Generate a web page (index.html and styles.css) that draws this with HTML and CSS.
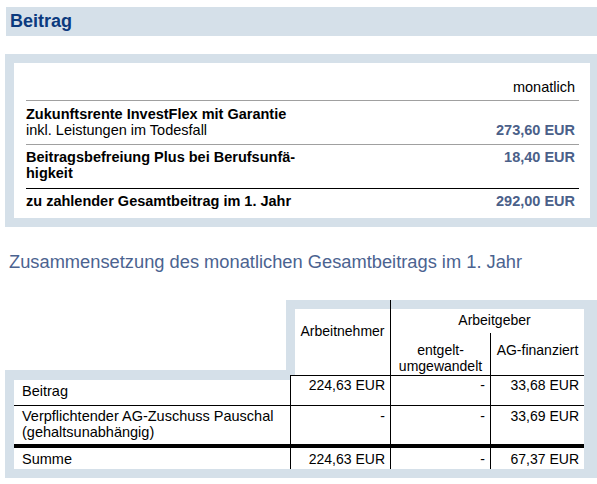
FILE: index.html
```html
<!DOCTYPE html>
<html lang="de">
<head>
<meta charset="utf-8">
<title>Beitrag</title>
<link rel="stylesheet" href="styles.css">
</head>
<body>
<div class="page">
  <h1 class="titlebar">Beitrag</h1>

  <section class="box1">
    <div class="t1-head">monatlich</div>
    <div class="t1-row r1">
      <div class="t1-label"><strong>Zukunftsrente InvestFlex mit Garantie</strong><br>inkl. Leistungen im Todesfall</div>
      <div class="t1-amount">273,60 EUR</div>
    </div>
    <div class="t1-row r2">
      <div class="t1-label"><strong>Beitragsbefreiung Plus bei Berufsunfä-<br>higkeit</strong></div>
      <div class="t1-amount">18,40 EUR</div>
    </div>
    <div class="t1-row r3">
      <div class="t1-label"><strong>zu zahlender Gesamtbeitrag im 1. Jahr</strong></div>
      <div class="t1-amount">292,00 EUR</div>
    </div>
  </section>

  <h2 class="subhead">Zusammensetzung des monatlichen Gesamtbeitrags im 1. Jahr</h2>

  <section class="comp">
    <div class="comp-head">
      <div class="head-spacer"></div>
      <div class="head-main">
        <div class="h-an">Arbeitnehmer</div>
        <div class="h-ag">
          <div class="h-ag-inner">
            <div class="h-ag-title">Arbeitgeber</div>
            <div class="h-ag-sub">
              <div class="h-eu">entgelt-<br>umgewandelt</div>
              <div class="h-fin">AG-finanziert</div>
            </div>
          </div>
        </div>
      </div>
    </div>
    <div class="comp-body">
      <div class="c lab row1">Beitrag</div>
      <div class="c val row1">224,63 EUR</div>
      <div class="c val row1">-</div>
      <div class="c val row1">33,68 EUR</div>

      <div class="c lab row2">Verpflichtender AG-Zuschuss Pauschal<br>(gehaltsunabhängig)</div>
      <div class="c val row2">-</div>
      <div class="c val row2">-</div>
      <div class="c val row2">33,69 EUR</div>

      <div class="c lab row3">Summe</div>
      <div class="c val row3">224,63 EUR</div>
      <div class="c val row3">-</div>
      <div class="c val row3">67,37 EUR</div>
    </div>
  </section>
</div>
</body>
</html>
```

FILE: styles.css
```css
* {
  box-sizing: border-box;
}

body {
  margin: 0;
  background: #ffffff;
  font-family: "Liberation Sans", Arial, sans-serif;
  color: #000000;
}

.page {
  padding-top: 7px;
}

.titlebar {
  margin: 0 0 18px 6px;
  height: 29px;
  line-height: 29px;
  padding-left: 4px;
  background: #d5e0e9;
  color: #0b3a7e;
  font-size: 18px;
  font-weight: bold;
}

/* Box 1 */
.box1 {
  margin-left: 5px;
  border: 9px solid #d5e0e9;
  border-right-width: 7px;
  padding: 0 11px 0 12px;
  background: #ffffff;
  font-size: 14.5px;
  line-height: 16px;
}

.t1-head {
  text-align: right;
  padding: 16px 4px 5px 0;
  border-bottom: 1px solid #a0a0a0;
}

.t1-row {
  display: flex;
  justify-content: space-between;
}

.r1 {
  align-items: flex-end;
  padding: 5px 4px 6px 0;
  border-bottom: 1px solid #a0a0a0;
}

.r2 {
  align-items: flex-start;
  padding: 4px 4px 7px 0;
  border-bottom: 1px solid #000000;
}

.r3 {
  align-items: flex-start;
  padding: 4px 4px 9px 0;
}

.t1-amount {
  color: #4a6089;
  font-weight: bold;
  white-space: nowrap;
}

/* Heading */
.subhead {
  margin: 24px 0 27px 9px;
  font-size: 18.3px;
  line-height: 22px;
  font-weight: normal;
  color: #4b6390;
}

/* Composition table */
.comp-head {
  display: flex;
  margin-left: 5px;
  height: 75px;
  font-size: 14px;
  line-height: 16px;
}

.head-spacer {
  width: 281px;
  background: linear-gradient(#d5e0e9, #d5e0e9) left bottom / 100% 5px no-repeat;
}

.head-main {
  flex: 1;
  display: flex;
  background: #d5e0e9;
  padding: 0 13px 0 9px;
}

.h-an {
  width: 95px;
  margin-top: 9px;
  background: #ffffff;
  text-align: center;
  padding-top: 14px;
}

.h-ag {
  flex: 1;
  display: flex;
  flex-direction: column;
  border-left: 1px solid #000000;
}

.h-ag-inner {
  flex: 1;
  margin-top: 9px;
  background: #ffffff;
  display: flex;
  flex-direction: column;
}

.h-ag-title {
  height: 24px;
  padding: 3px 0 0 14px;
  text-align: center;
}

.h-ag-sub {
  flex: 1;
  display: flex;
}

.h-eu {
  width: 99px;
  text-align: center;
  padding-top: 9px;
}

.h-fin {
  flex: 1;
  border-left: 1px solid #000000;
  text-align: center;
  padding-top: 9px;
}

.comp-body {
  margin-left: 5px;
  background: #d5e0e9;
  padding: 0 13px 9px 9px;
  display: grid;
  grid-template-columns: 276px 100px 100px 94px;
  grid-template-rows: 30px 39px 25px;
}

.c {
  background: #ffffff;
  font-size: 14.5px;
  line-height: 16px;
}

.lab {
  padding-left: 8px;
}

.val {
  border-left: 1px solid #000000;
  text-align: right;
  padding-right: 5px;
  font-size: 14px;
}

.lab.row1 {
  border-top: 5px solid #d5e0e9;
  padding-top: 3px;
}

.val.row1 {
  border-top: 1px solid #000000;
  padding-top: 1px;
}

.row2 {
  border-top: 1px solid #000000;
  padding-top: 2px;
}

.row3 {
  border-top: 4px solid #000000;
  padding-top: 3px;
}
```
